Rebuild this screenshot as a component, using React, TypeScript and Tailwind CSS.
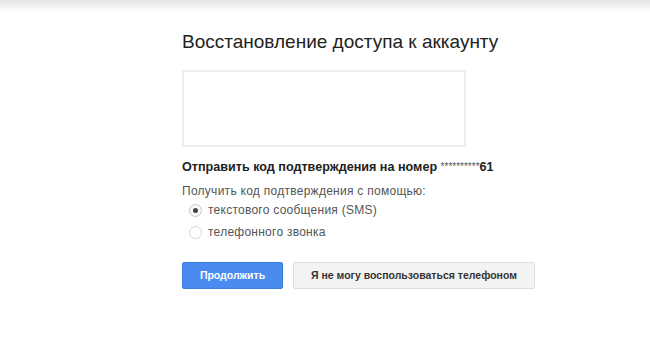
import React from "react";

export default function App() {
  return (
    <div className="w-[650px] h-[341px] bg-white overflow-hidden" style={{ fontFamily: '"Liberation Sans", Arial, sans-serif' }}>
      <div className="h-[9px] bg-gradient-to-b from-[#e4e4e4] to-[#f7f7f7]" />
      <div className="h-[3px] bg-[#fbfbfb]" />
      <div className="pl-[182px] pt-[18px]">
        <h1 className="text-[19px] leading-[24px] text-[#222] font-normal whitespace-nowrap">
          Восстановление доступа к аккаунту
        </h1>
        <div className="mt-[16px] w-[284px] h-[77px] border-2 border-[#ececec] bg-white" />
        <div className="mt-[12px] text-[12.6px] leading-[16px] font-bold text-[#222] whitespace-nowrap">
          Отправить код подтверждения на номер <span className="font-normal text-[#555] text-[10px] align-top">**********</span>61
        </div>
        <div className="mt-[8px] text-[12px] tracking-[0.27px] leading-[16px] text-[#555] whitespace-nowrap">
          Получить код подтверждения с помощью:
        </div>
        <div className="mt-[0px] flex flex-col">
          <label className="flex items-center h-[22px] pl-[7px] gap-[6px]">
            <span className="w-[13px] h-[13px] rounded-full border border-[#c6c6c6] bg-[#f8f8f8] flex items-center justify-center">
              <span className="w-[5px] h-[5px] rounded-full bg-[#444]" />
            </span>
            <span className="text-[12px] tracking-[0.25px] text-[#555]">текстового сообщения (SMS)</span>
          </label>
          <label className="flex items-center h-[22px] pl-[7px] gap-[6px]">
            <span className="w-[13px] h-[13px] rounded-full border border-[#d6d6d6] bg-white" />
            <span className="text-[12px] tracking-[0.25px] text-[#555]">телефонного звонка</span>
          </label>
        </div>
        <div className="mt-[19px] flex gap-[10px]">
          <button className="w-[101px] h-[27px] rounded-[2px] bg-[#4a8bf0] border border-[#3a7ee0] text-white text-[10.5px] font-bold">
            Продолжить
          </button>
          <button className="w-[242px] h-[27px] rounded-[2px] bg-[#f3f3f3] border border-[#dedede] text-[#333] text-[10.5px] font-bold">
            Я не могу воспользоваться телефоном
          </button>
        </div>
      </div>
    </div>
  );
}
